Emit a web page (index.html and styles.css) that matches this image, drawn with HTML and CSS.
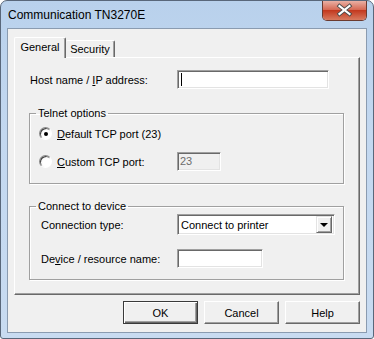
FILE: index.html
```html
<!DOCTYPE html>
<html>
<head>
<meta charset="utf-8">
<link rel="stylesheet" href="styles.css">
</head>
<body>
<div class="window">
  <div class="titlebar">
    <span class="title">Communication TN3270E</span>
    <div class="close">
      <svg width="43" height="19" viewBox="0 0 43 19">
        <defs>
          <linearGradient id="cg" x1="0" y1="0" x2="0" y2="1">
            <stop offset="0" stop-color="#e9b0a4"/>
            <stop offset="0.45" stop-color="#d66a55"/>
            <stop offset="0.5" stop-color="#c3391f"/>
            <stop offset="1" stop-color="#d87a5f"/>
          </linearGradient>
        </defs>
        <rect x="0" y="0" width="43" height="19" fill="url(#cg)"/>
        <path d="M16.5 5 L26.5 13 M26.5 5 L16.5 13" stroke="#4b4b4b" stroke-width="4" stroke-linecap="square"/>
        <path d="M16.5 5 L26.5 13 M26.5 5 L16.5 13" stroke="#ffffff" stroke-width="2.2" stroke-linecap="square"/>
      </svg>
    </div>
  </div>
  <div class="client">
    <div class="tabs">
      <div class="tab active">General</div>
      <div class="tab">Security</div>
    </div>
    <div class="panel">
      <div class="row host-row">
        <span class="label host-label">Host name / <u>I</u>P address:</span>
        <div class="edit host-edit"><span class="caret"></span></div>
      </div>
      <fieldset class="group telnet">
        <legend>Telnet options</legend>
        <div class="radio-row first">
          <span class="radio-cell">
            <span class="radio checked"><span class="dot"></span></span>
            <span class="label"><u>D</u>efault TCP port (23)</span>
          </span>
        </div>
        <div class="radio-row second">
          <span class="radio-cell">
            <span class="radio"></span>
            <span class="label"><u>C</u>ustom TCP port:</span>
          </span>
          <div class="edit port-edit disabled">23</div>
        </div>
      </fieldset>
      <fieldset class="group device">
        <legend>Connect to device</legend>
        <div class="dev-row first">
          <span class="label dev-label">Connection type:</span>
          <div class="combo">
            <span class="combo-text">Connect to printer</span>
            <span class="combo-btn"><span class="arrow"></span></span>
          </div>
        </div>
        <div class="dev-row second">
          <span class="label dev-label">De<u>v</u>ice / resource name:</span>
          <div class="edit name-edit"></div>
        </div>
      </fieldset>
    </div>
    <div class="buttons">
      <div class="btn default">OK</div>
      <div class="btn">Cancel</div>
      <div class="btn">Help</div>
    </div>
  </div>
</div>
</body>
</html>
```
FILE: styles.css
```css
* { box-sizing: border-box; }
html, body {
  margin: 0;
  padding: 0;
  width: 374px;
  height: 339px;
  overflow: hidden;
  background: #ffffff;
}
body {
  font-family: "Liberation Sans", Arial, sans-serif;
  font-size: 11px;
  color: #000;
}
.window {
  width: 374px;
  height: 339px;
  border: 1px solid #59677a;
  border-radius: 7px 7px 3px 3px;
  background: linear-gradient(180deg, #b9d1ec 0%, #c3d8f0 40%, #c8dbf1 100%);
  display: flex;
  flex-direction: column;
}
.titlebar {
  height: 27px;
  display: flex;
  align-items: center;
  justify-content: space-between;
  padding-left: 7px;
}
.title {
  font-size: 12px;
  color: #000;
  margin-top: 1px;
}
.close {
  align-self: flex-start;
  width: 45px;
  height: 20px;
  margin-right: 6px;
  border: 1px solid #6a3a30;
  border-top: none;
  border-radius: 0 0 5px 5px;
  overflow: hidden;
  box-shadow: inset 0 0 0 1px rgba(255,255,255,0.35);
}
.close svg { display: block; }
.client {
  flex: 1;
  margin: 0 6px 5px 6px;
  border: 1px solid #8a9bb0;
  background: #f0f0f0;
  display: flex;
  flex-direction: column;
}
.tabs {
  display: flex;
  align-items: flex-end;
  margin-top: 8px;
  padding-left: 6px;
  height: 20px;
  position: relative;
  z-index: 1;
}
.tab {
  background: #f0f0f0;
  border-top: 1px solid #ffffff;
  border-left: 1px solid #ffffff;
  border-right: 1px solid #696969;
  box-shadow: inset -1px 0 0 #a0a0a0;
  border-radius: 2px 2px 0 0;
  text-align: center;
}
.tab.active {
  width: 52px;
  height: 21px;
  margin-bottom: -1px;
  padding-top: 3px;
}
.tab:not(.active) {
  width: 49px;
  height: 17px;
  padding-top: 2px;
  border-left: none;
}
.panel {
  margin-left: 6px;
  width: 346px;
  height: 238px;
  border-top: 1px solid #ffffff;
  border-left: 1px solid #ffffff;
  border-right: 1px solid #696969;
  border-bottom: 1px solid #696969;
  box-shadow: inset -1px -1px 0 #a0a0a0;
  display: flex;
  flex-direction: column;
}
.row {
  display: flex;
  align-items: center;
}
.host-row {
  margin-top: 12px;
  padding-left: 15px;
  height: 19px;
}
.host-label { width: 147px; }
.edit {
  height: 19px;
  background: #ffffff;
  border-top: 1px solid #a0a0a0;
  border-left: 1px solid #a0a0a0;
  border-right: 1px solid #ffffff;
  border-bottom: 1px solid #ffffff;
  box-shadow: inset 1px 1px 0 #696969, inset -1px -1px 0 #e3e3e3;
  padding: 2px 3px;
  line-height: 13px;
}
.host-edit { width: 152px; }
.caret {
  display: block;
  width: 1px;
  height: 13px;
  background: #000;
  margin-left: 0;
}
.group {
  margin: 0 0 0 14px;
  padding: 0;
  width: 315px;
  border: 1px solid #a0a0a0;
  box-shadow: inset 1px 1px 0 #ffffff, 1px 1px 0 #ffffff;
  min-width: 0;
}
.group legend {
  margin-left: 6px;
  padding: 0 2px;
  line-height: 13px;
  font-size: 11px;
}
.telnet {
  margin-top: 18px;
  height: 77px;
}
.radio-row {
  display: flex;
  align-items: center;
  height: 19px;
  margin-left: 9px;
}
.radio-row.first { margin-top: 4px; }
.radio-row.second { margin-top: 9px; }
.radio-cell {
  display: flex;
  align-items: center;
  width: 138px;
}
.radio {
  width: 13px;
  height: 13px;
  border-radius: 50%;
  border: 1px solid;
  border-color: #8a8a8a #ffffff #ffffff #8a8a8a;
  background: radial-gradient(circle at 65% 65%, #ffffff 40%, #e8e8e8 100%);
  box-shadow: inset 1px 1px 0 #404040;
  margin-right: 5px;
  display: flex;
  align-items: center;
  justify-content: center;
}
.radio .dot {
  width: 4px;
  height: 4px;
  border-radius: 50%;
  background: #000;
}
.port-edit {
  width: 44px;
  background: #f0f0f0;
  color: #6d6d6d;
  padding-left: 2px;
}
.device {
  margin-top: 16px;
  height: 80px;
}
.dev-row {
  display: flex;
  align-items: center;
  margin-left: 11px;
}
.dev-row.first { margin-top: 1px; height: 21px; }
.dev-row.second { margin-top: 14px; height: 19px; }
.dev-label { width: 136px; }
.combo {
  width: 158px;
  height: 21px;
  background: #ffffff;
  border-top: 1px solid #a0a0a0;
  border-left: 1px solid #a0a0a0;
  border-right: 1px solid #ffffff;
  border-bottom: 1px solid #ffffff;
  box-shadow: inset 1px 1px 0 #696969, inset -1px -1px 0 #e3e3e3;
  display: flex;
  align-items: center;
  justify-content: space-between;
  padding: 2px 2px 2px 3px;
}
.combo-btn {
  width: 16px;
  height: 17px;
  background: #f0f0f0;
  border-top: 1px solid #e3e3e3;
  border-left: 1px solid #e3e3e3;
  border-right: 1px solid #696969;
  border-bottom: 1px solid #696969;
  box-shadow: inset 1px 1px 0 #ffffff, inset -1px -1px 0 #a0a0a0;
  display: flex;
  align-items: center;
  justify-content: center;
}
.arrow {
  width: 0;
  height: 0;
  border-left: 4px solid transparent;
  border-right: 4px solid transparent;
  border-top: 4px solid #000;
  margin-top: 1px;
}
.name-edit { width: 86px; }
.buttons {
  display: flex;
  justify-content: flex-end;
  gap: 6px;
  margin-top: 6px;
  padding-right: 6px;
}
.btn {
  width: 75px;
  height: 23px;
  background: #f0f0f0;
  border-top: 1px solid #ffffff;
  border-left: 1px solid #ffffff;
  border-right: 1px solid #696969;
  border-bottom: 1px solid #696969;
  box-shadow: inset -1px -1px 0 #a0a0a0;
  display: flex;
  align-items: center;
  justify-content: center;
  font-size: 11px;
}
.btn.default {
  border: 1px solid #3a3a3a;
  box-shadow: inset 1px 1px 0 #ffffff, inset -1px -1px 0 #696969, inset -2px -2px 0 #a0a0a0;
}
```
